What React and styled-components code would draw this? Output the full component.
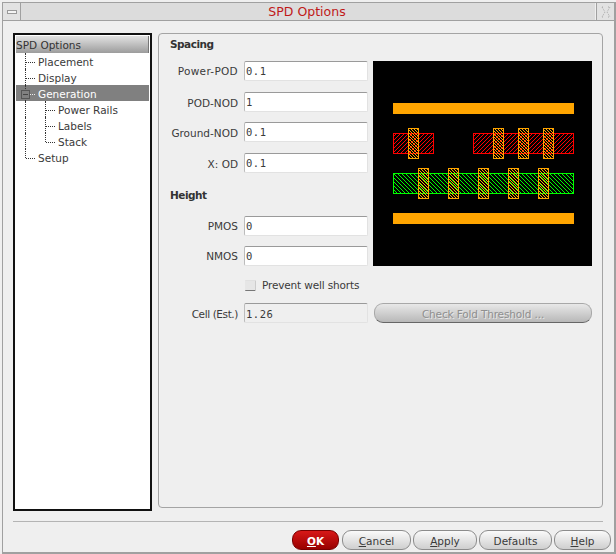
import React from 'react';
import styled, { createGlobalStyle } from 'styled-components';

const Global = createGlobalStyle`
  html, body { margin: 0; padding: 0; background: #efefef; }
  body { width: 616px; height: 554px; overflow: hidden; font-family: "DejaVu Sans", sans-serif; font-size: 10.5px; color: #3a3a3a; }
`;

const Window = styled.div`
  box-sizing: border-box;
  width: 614px; height: 552px;
  margin: 2px 0 0 2px;
  border: solid #a0a0a0;
  border-width: 1px 2px 2px 1px;
  display: flex; flex-direction: column;
`;
const TitleBar = styled.div`
  height: 18px; flex: none;
  display: flex;
  border-bottom: 1px solid #a0a0a0;
  box-sizing: border-box;
`;
const TitleButton = styled.div`
  flex: none; width: 18px;
  box-sizing: border-box;
  background: #e2e2e2;
  border-${p => p.$side}: 1px solid #a0a0a0;
  display: flex; align-items: center; justify-content: center;
`;
const TitleText = styled.div`
  flex: 1;
  background: #dcdcdc;
  color: #c01818;
  text-align: center;
  font-size: 12.5px;
  line-height: 17px;
  padding-right: 2px;
  border-right: 1px solid #efefef;
`;
const Body = styled.div`
  flex: 1;
  display: flex; flex-direction: column;
  padding: 12px 10px 2px 10px;
  min-height: 0;
`;
const Main = styled.div`
  height: 478px; flex: none;
  display: flex; gap: 6px;
`;
const Tree = styled.div`
  box-sizing: border-box;
  width: 139px;
  border: 2px solid #111;
  background: #fff;
  padding: 1px;
`;
const TreeHeader = styled.div`
  box-sizing: border-box;
  height: 17px; line-height: 17px;
  padding: 1px 0 0 0;
  background: linear-gradient(#e2e2e2, #9c9c9c);
  border-right: 1px solid #777;
  color: #333;
  font-size: 10.5px;
`;
const TreeRow = styled.div`
  height: 16px; line-height: 18px;
  display: flex;
  background: ${p => (p.$selected ? '#808080' : 'transparent')};
  color: ${p => (p.$selected ? '#fff' : '#3a3a3a')};
`;
const Guide = styled.span`
  position: relative; flex: none;
  width: 20px; height: 16px;
  &::before {
    content: ''; position: absolute; left: 9px; top: 0;
    height: ${p => (p.$last ? '9px' : '16px')};
    border-left: 1px dotted #333;
  }
  &::after {
    content: ''; position: absolute; left: 10px; top: 9px; width: 9px;
    border-top: ${p => (p.$branch ? '1px dotted ' + (p.$light ? '#eee' : '#333') : '0')};
  }
`;
const Expander = styled.span`
  position: absolute; z-index: 1;
  left: 5px; top: 5px;
  box-sizing: border-box;
  width: 9px; height: 9px;
  border: 1px solid #555;
  background: #808080;
  &::after { content: ''; position: absolute; left: 1px; right: 1px; top: 3px; border-top: 1px solid #444; }
`;
const TreeLabel = styled.span`
  padding-left: 2px;
  white-space: nowrap;
`;
const Panel = styled.div`
  box-sizing: border-box;
  width: 445px; height: 475px;
  border: 1px solid #a4a4a4;
  border-radius: 4px;
  padding: 2px 10px 0 11px;
  display: flex; gap: 5px;
`;
const FormCol = styled.div`
  width: 198px; flex: none;
  display: flex; flex-direction: column;
`;
const SectionTitle = styled.div`
  height: 16px; line-height: 16px;
  font-weight: bold;
  letter-spacing: -0.5px;
  color: #333;
  margin: 0 0 ${p => p.$bottom};
`;
const FieldRow = styled.div`
  display: flex; align-items: center; justify-content: flex-end; gap: 6px;
  height: 20px;
  margin-bottom: ${p => p.$gap || '10px'};
`;
const FieldLabel = styled.label`
  white-space: nowrap;
  letter-spacing: ${p => p.$track || '0'};
  padding-top: ${p => p.$drop || '0'};
`;
const Field = styled.div`
  box-sizing: border-box;
  width: 124px; height: 20px;
  flex: none;
  background: ${p => (p.$readonly ? '#efefef' : '#fff')};
  border: 1px solid #e2e2e2;
  border-top-color: #9a9a9a;
  border-left-color: #bcbcbc;
  border-radius: 2px;
  padding: ${p => p.$drop || '2px'} 0 0 1px;
  font-family: "DejaVu Sans Mono", monospace;
  font-size: 10.5px;
  letter-spacing: 0.5px;
  line-height: 14px;
`;
const CheckRow = styled.div`
  display: flex; align-items: center; gap: 6px;
  height: 20px;
  margin: 0 0 8px 75px;
  white-space: nowrap;
  letter-spacing: -0.15px;
`;
const CheckBox = styled.span`
  box-sizing: border-box;
  width: 11px; height: 11px; flex: none;
  background: #e6e6e6;
  border-bottom: 1px solid #777;
  border-right: 1px solid #ccc;
  border-top: 1px solid #e0e0e0;
  border-radius: 1px;
`;
const SideCol = styled.div`
  width: 219px; flex: none;
  display: flex; flex-direction: column;
  padding-top: 25px;
`;
const Preview = styled.svg`
  display: block;
  width: 219px; height: 205px;
  background: #000;
`;
const WideButton = styled.div`
  box-sizing: border-box;
  margin: 37px 0 0 1px;
  width: 218px;
  height: 20px;
  border-radius: 9px;
  border: 1px solid #a8a8a8;
  border-bottom-color: #666;
  background: linear-gradient(#e8e8e8, #b8b8b8);
  color: #8f8f8f;
  text-shadow: 1px 1px 0 #e8e8e8;
  text-align: center;
  line-height: 20px;
  letter-spacing: -0.15px;
`;
const Rule = styled.div`
  height: 1px; flex: none;
  background: #b4b4b4;
  margin: 10px 1px 0 0;
`;
const Footer = styled.div`
  display: flex; justify-content: flex-end; gap: 2px;
  margin: 8px -7px 0 0;
`;
const Button = styled.div`
  box-sizing: border-box;
  width: ${p => p.$w}px; height: 20px;
  margin-right: ${p => (p.$primary ? '1px' : '0')};
  border-radius: 9px;
  border: 1px solid ${p => (p.$primary ? '#700' : '#8c8c8c')};
  background: ${p => (p.$primary ? 'linear-gradient(#d81818, #980000)' : 'linear-gradient(#fafafa, #cfcfcf)')};
  color: ${p => (p.$primary ? '#fff' : '#3a3a3a')};
  font-weight: ${p => (p.$primary ? 'bold' : 'normal')};
  text-align: center;
  line-height: 21px;
  u { text-decoration: underline; }
`;

const redBoxes = [[20, 41], [100, 101]];
const redPoly = [35, 120, 145, 170];
const greenPoly = [45, 75, 105, 135, 165];

function Layout() {
  return (
    <Preview viewBox="0 0 219 205" shapeRendering="crispEdges">
      <defs>
        <pattern id="red" width="4" height="4" patternUnits="userSpaceOnUse">
          <path d="M0 3h1v1H0zM1 2h1v1H1zM2 1h1v1H2zM3 0h1v1H3z" fill="#f00" />
        </pattern>
        <pattern id="green" width="4" height="4" patternUnits="userSpaceOnUse">
          <path d="M0 0h1v1H0zM1 1h1v1H1zM2 2h1v1H2zM3 3h1v1H3z" fill="#0f0" />
        </pattern>
        <pattern id="poly" width="3" height="3" patternUnits="userSpaceOnUse">
          <path d="M0 0h1v1H0zM1 1h1v1H1zM2 2h1v1H2z" fill="#ffa500" />
        </pattern>
      </defs>
      <rect x="20" y="42" width="181" height="11" fill="#ffa500" />
      <rect x="20" y="152" width="181" height="11" fill="#ffa500" />
      {redBoxes.map(([x, w]) => (
        <rect key={x} x={x + 0.5} y="72.5" width={w - 1} height="20" fill="url(#red)" stroke="#f00" />
      ))}
      <rect x="20.5" y="112.5" width="180" height="20" fill="url(#green)" stroke="#0f0" />
      {redPoly.map(x => (
        <rect key={x} x={x + 0.5} y="67.5" width="10" height="30" fill="url(#poly)" stroke="#ffa500" />
      ))}
      {greenPoly.map(x => (
        <rect key={x} x={x + 0.5} y="107.5" width="10" height="30" fill="url(#poly)" stroke="#ffa500" />
      ))}
    </Preview>
  );
}

export default function App() {
  return (
    <>
      <Global />
      <Window>
        <TitleBar>
          <TitleButton $side="right">
            <svg width="10" height="4"><rect x="0.5" y="0.5" width="9" height="3" fill="#f4f4f4" stroke="#999" /></svg>
          </TitleButton>
          <TitleText>SPD Options</TitleText>
          <TitleButton $side="left">
            <svg width="12" height="12" fill="none" stroke="#aaa" strokeDasharray="1 1">
              <path d="M2 1l3 5-3 5M10 1L7 6l3 5M2 1h2M8 1h2M2 11h2M8 11h2" />
            </svg>
          </TitleButton>
        </TitleBar>
        <Body>
          <Main>
            <Tree>
              <TreeHeader>SPD Options</TreeHeader>
              <TreeRow><Guide $branch /><TreeLabel>Placement</TreeLabel></TreeRow>
              <TreeRow><Guide $branch /><TreeLabel>Display</TreeLabel></TreeRow>
              <TreeRow $selected><Guide $branch $light><Expander /></Guide><TreeLabel>Generation</TreeLabel></TreeRow>
              <TreeRow><Guide /><Guide $branch /><TreeLabel>Power Rails</TreeLabel></TreeRow>
              <TreeRow><Guide /><Guide $branch /><TreeLabel>Labels</TreeLabel></TreeRow>
              <TreeRow><Guide /><Guide $branch $last /><TreeLabel>Stack</TreeLabel></TreeRow>
              <TreeRow><Guide $branch $last /><TreeLabel>Setup</TreeLabel></TreeRow>
            </Tree>
            <Panel>
              <FormCol>
                <SectionTitle $bottom="9px">Spacing</SectionTitle>
                <FieldRow $gap="11px"><FieldLabel $track="0.3px">Power-POD</FieldLabel><Field>0.1</Field></FieldRow>
                <FieldRow><FieldLabel $drop="2px">POD-NOD</FieldLabel><Field>1</Field></FieldRow>
                <FieldRow $gap="11px"><FieldLabel $drop="2px">Ground-NOD</FieldLabel><Field>0.1</Field></FieldRow>
                <FieldRow $gap="14px"><FieldLabel $drop="2px">X: OD</FieldLabel><Field>0.1</Field></FieldRow>
                <SectionTitle $bottom="13px">Height</SectionTitle>
                <FieldRow $gap="10px"><FieldLabel>PMOS</FieldLabel><Field>0</Field></FieldRow>
                <FieldRow $gap="9px"><FieldLabel>NMOS</FieldLabel><Field>0</Field></FieldRow>
                <CheckRow><CheckBox />Prevent well shorts</CheckRow>
                <FieldRow><FieldLabel $track="-0.4px" $drop="2px">Cell (Est.)</FieldLabel><Field $readonly $drop="3px">1.26</Field></FieldRow>
              </FormCol>
              <SideCol>
                <Layout />
                <WideButton>Check Fold Threshold ...</WideButton>
              </SideCol>
            </Panel>
          </Main>
          <Rule />
          <Footer>
            <Button $primary $w={47}><u>O</u>K</Button>
            <Button $w={69}><u>C</u>ancel</Button>
            <Button $w={64}><u>A</u>pply</Button>
            <Button $w={73}>Defaults</Button>
            <Button $w={57}><u>H</u>elp</Button>
          </Footer>
        </Body>
      </Window>
    </>
  );
}
